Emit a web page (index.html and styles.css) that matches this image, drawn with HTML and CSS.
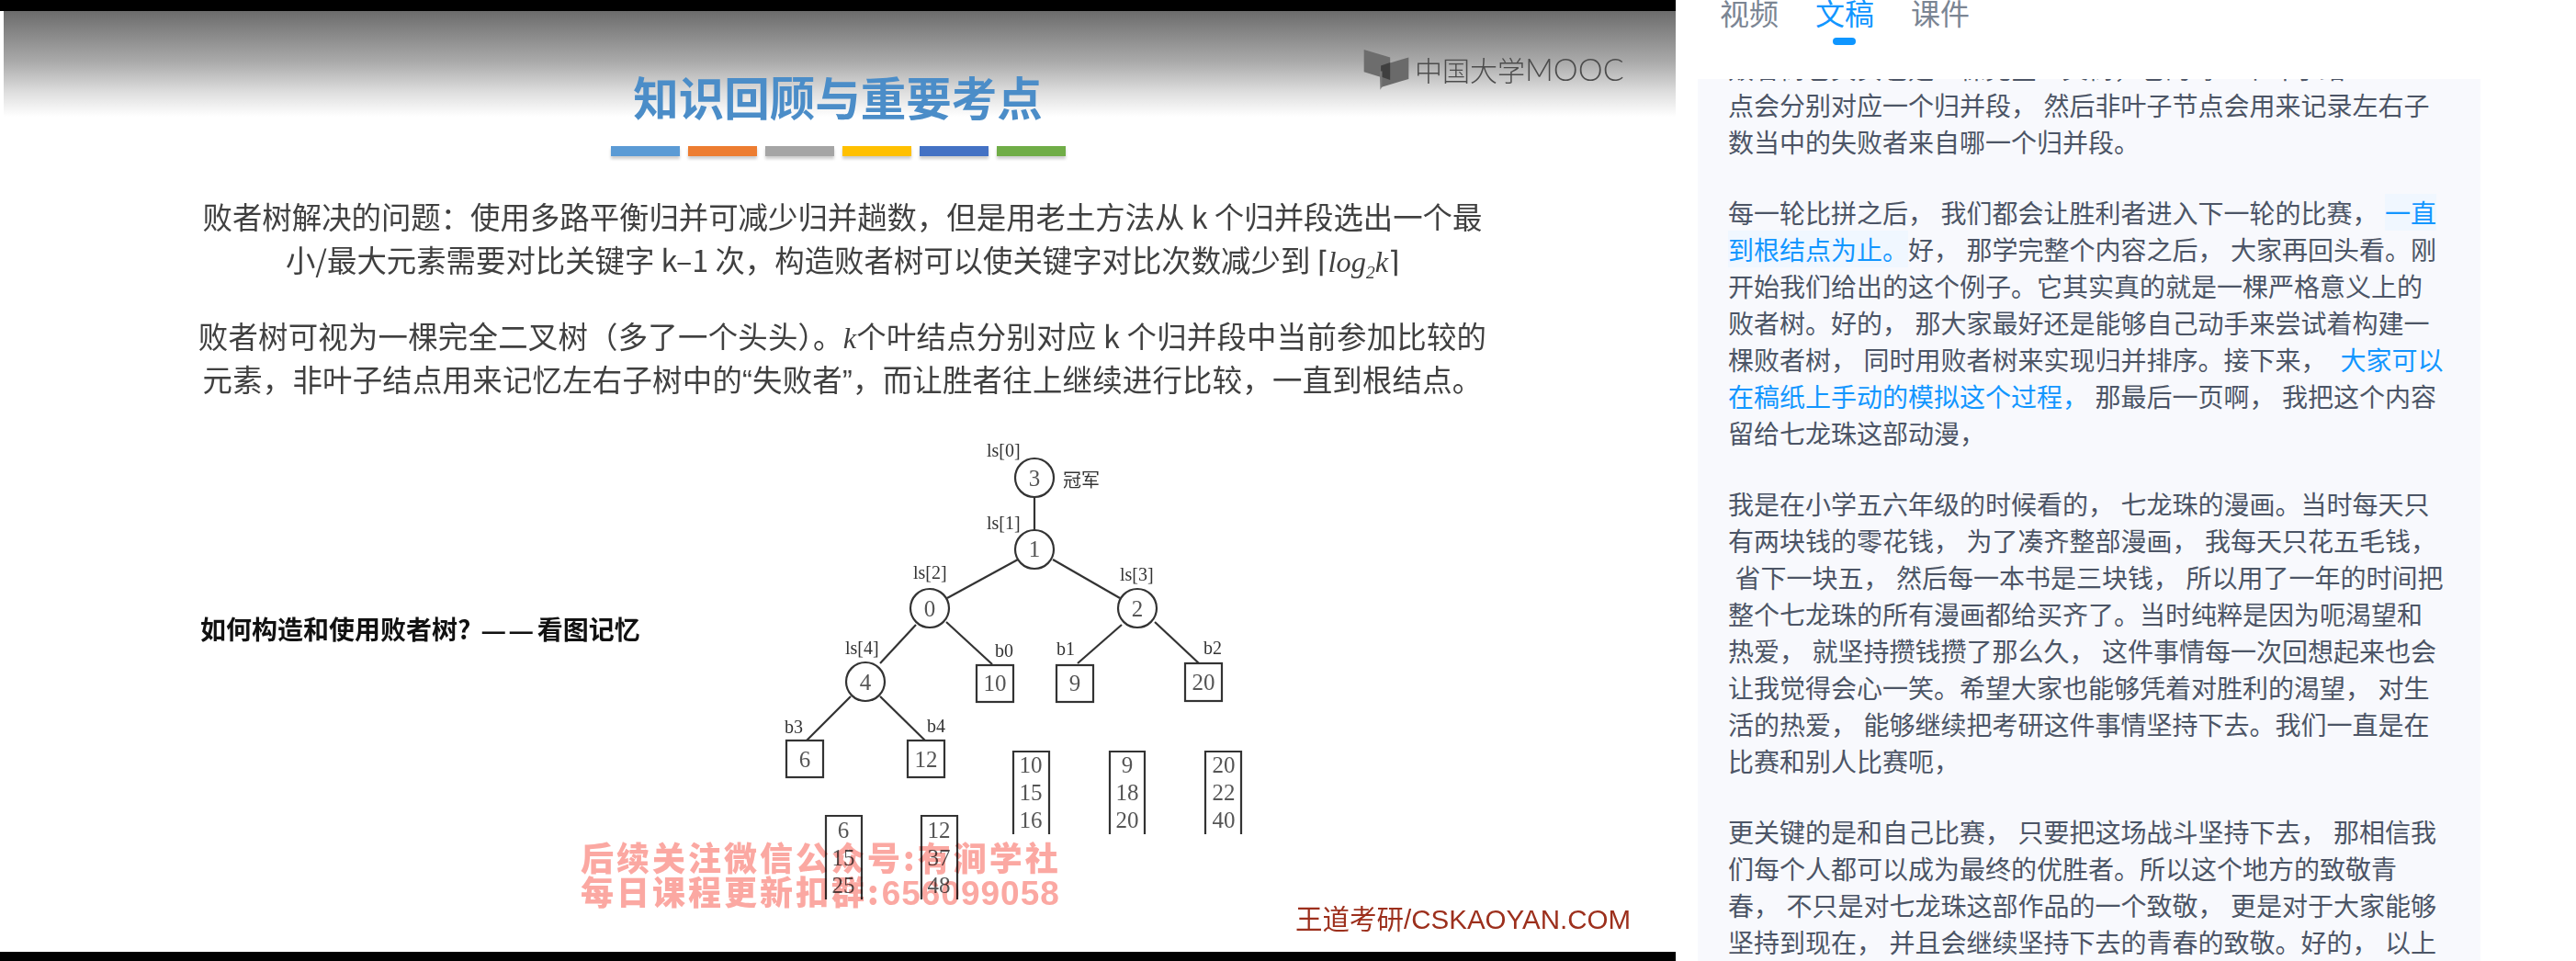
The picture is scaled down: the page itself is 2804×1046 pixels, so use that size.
FILE: index.html
```html
<!DOCTYPE html>
<html lang="zh-CN">
<head>
  <meta charset="UTF-8">
  <title>败者树 - 文稿</title>
  <link rel="stylesheet" href="styles.css">
</head>
<body>
  <div class="video">
    <div class="black-top"></div>
    <div class="slide">
      <div class="logo">
        <svg class="logo-icon" viewBox="40 25 155 135">
          <polygon points="45,30 130,55 130,128 45,102" fill="#6d6d6d"/>
          <polygon points="100,82 190,55 190,125 100,152" fill="#6a6a6a"/>
          <polygon points="100,82 130,72 130,128 100,118" fill="#3f3f3f"/>
          <polygon points="96,100 104,100 104,150 98,160" fill="#777"/>
        </svg>
        <span class="logo-cn">中国大学</span><span class="logo-en">MOOC</span>
      </div>

      <h1 class="title">知识回顾与重要考点</h1>
      <div class="bars">
        <span class="bar c1"></span>
        <span class="bar c2"></span>
        <span class="bar c3"></span>
        <span class="bar c4"></span>
        <span class="bar c5"></span>
        <span class="bar c6"></span>
      </div>

      <p class="para first">败者树解决的问题：使用多路平衡归并可减少归并趟数，但是用老土方法从 k 个归并段选出一个最<br>小/最大元素需要对比关键字 k–1 次，构造败者树可以使关键字对比次数减少到 <span class="bracket">⌈</span><span class="math">log<sub>2</sub>k</span><span class="bracket">⌉</span></p>
      <p class="para second">败者树可视为一棵完全二叉树（多了一个头头）。<span class="math">k</span>个叶结点分别对应 k 个归并段中当前参加比较的<br>元素，非叶子结点用来记忆左右子树中的<span class="quote">“</span>失败者<span class="quote">”</span>，而让胜者往上继续进行比较，一直到根结点。</p>

      <div class="lower">
        <div class="how">如何构造和使用败者树? <span class="dash">——</span>看图记忆</div>
        <svg class="tree" viewBox="840 480 520 510">
          <g class="edges">
            <line x1="1126" y1="541" x2="1126" y2="577"/>
            <line x1="1108" y1="609" x2="1031" y2="651"/>
            <line x1="1146" y1="609" x2="1219" y2="651"/>
            <line x1="997" y1="680" x2="958" y2="722"/>
            <line x1="1030" y1="677" x2="1080" y2="723"/>
            <line x1="1221" y1="680" x2="1173" y2="722"/>
            <line x1="1257" y1="677" x2="1305" y2="722"/>
            <line x1="926" y1="758" x2="878" y2="806"/>
            <line x1="958" y1="758" x2="1007" y2="806"/>
          </g>
          <g class="nodes">
            <circle cx="1126" cy="520" r="21"/>
            <circle cx="1126" cy="598" r="21"/>
            <circle cx="1012" cy="662" r="21"/>
            <circle cx="1238" cy="662" r="21"/>
            <circle cx="942" cy="742" r="21"/>
            <rect x="1063" y="724" width="40" height="40"/>
            <rect x="1150" y="724" width="40" height="40"/>
            <rect x="1290" y="722" width="40" height="41"/>
            <rect x="856" y="806" width="40" height="40"/>
            <rect x="988" y="806" width="40" height="40"/>
          </g>
          <g class="runs">
            <polyline points="1103,908 1103,818 1142,818 1142,908"/>
            <polyline points="1208,908 1208,818 1246,818 1246,908"/>
            <polyline points="1312,908 1312,818 1351,818 1351,908"/>
            <polyline points="899,979 899,888 938,888 938,979"/>
            <polyline points="1003,979 1003,888 1042,888 1042,979"/>
          </g>
          <g class="labels">
            <text x="1074" y="497">ls[0]</text>
            <text x="1074" y="576">ls[1]</text>
            <text x="994" y="630">ls[2]</text>
            <text x="1219" y="632">ls[3]</text>
            <text x="920" y="712">ls[4]</text>
            <text x="1083" y="715">b0</text>
            <text x="1150" y="713">b1</text>
            <text x="1310" y="712">b2</text>
            <text x="854" y="798">b3</text>
            <text x="1009" y="797">b4</text>
            <text class="champion" x="1157" y="530">冠军</text>
          </g>
          <g class="values">
            <text x="1126" y="529">3</text>
            <text x="1126" y="606">1</text>
            <text x="1012" y="671">0</text>
            <text x="1238" y="671">2</text>
            <text x="942" y="751">4</text>
            <text x="1083" y="752">10</text>
            <text x="1170" y="752">9</text>
            <text x="1310" y="751">20</text>
            <text x="876" y="835">6</text>
            <text x="1008" y="835">12</text>
            <text x="1122" y="841">10</text>
            <text x="1122" y="871">15</text>
            <text x="1122" y="901">16</text>
            <text x="1227" y="841">9</text>
            <text x="1227" y="871">18</text>
            <text x="1227" y="901">20</text>
            <text x="1332" y="841">20</text>
            <text x="1332" y="871">22</text>
            <text x="1332" y="901">40</text>
            <text x="918" y="912">6</text>
            <text x="918" y="942">15</text>
            <text x="918" y="972">25</text>
            <text x="1022" y="912">12</text>
            <text x="1022" y="942">37</text>
            <text x="1022" y="972">48</text>
          </g>
        </svg>
      </div>

      <div class="site">王道考研/CSKAOYAN.COM</div>

      <div class="mark">后续关注微信公众号:有涧学社<br>每日课程更新扣群:<span class="mark-num">656099058</span></div>
    </div>
    <div class="black-bottom"></div>
  </div>

  <div class="side">
    <div class="tabs">
      <div class="tab">视频</div>
      <div class="tab active">文稿</div>
      <div class="tab">课件</div>
    </div>
    <div class="panel">
      <div class="transcript">
        <p>败者树它其实也是一棵完全二叉树，它的每一个叶子结<br>点会分别对应一个归并段， 然后非叶子节点会用来记录左右子<br>数当中的失败者来自哪一个归并段。</p>
        <p>每一轮比拼之后， 我们都会让胜利者进入下一轮的比赛， <span class="hl-bg"> 一直<br>到根结点为止。</span>好， 那学完整个内容之后， 大家再回头看。刚<br>开始我们给出的这个例子。它其实真的就是一棵严格意义上的<br>败者树。好的， 那大家最好还是能够自己动手来尝试着构建一<br>棵败者树， 同时用败者树来实现归并排序。接下来， <span class="hl">&nbsp;大家可以<br>在稿纸上手动的模拟这个过程，</span> 那最后一页啊， 我把这个内容<br>留给七龙珠这部动漫，</p>
        <p>我是在小学五六年级的时候看的， 七龙珠的漫画。当时每天只<br>有两块钱的零花钱， 为了凑齐整部漫画， 我每天只花五毛钱，<br>&nbsp;省下一块五， 然后每一本书是三块钱， 所以用了一年的时间把<br>整个七龙珠的所有漫画都给买齐了。当时纯粹是因为呃渴望和<br>热爱， 就坚持攒钱攒了那么久， 这件事情每一次回想起来也会<br>让我觉得会心一笑。希望大家也能够凭着对胜利的渴望， 对生<br>活的热爱， 能够继续把考研这件事情坚持下去。我们一直是在<br>比赛和别人比赛呃，</p>
        <p>更关键的是和自己比赛， 只要把这场战斗坚持下去， 那相信我<br>们每个人都可以成为最终的优胜者。所以这个地方的致敬青<br>春， 不只是对七龙珠这部作品的一个致敬， 更是对于大家能够<br>坚持到现在， 并且会继续坚持下去的青春的致敬。好的， 以上</p>
      </div>
    </div>
  </div>
</body>
</html>
```

FILE: styles.css
```css
* {
  box-sizing: border-box;
}
html, body {
  height: 100%;
}
body {
  margin: 0;
  display: flex;
  overflow: hidden;
  background: #fff;
  font-family: "Noto Sans CJK SC", "Liberation Sans", sans-serif;
}

/* video */
.video {
  width: 1824px;
  height: 1046px;
  display: flex;
  flex-direction: column;
}
.black-top {
  height: 12px;
  background: #000;
}
.black-bottom {
  height: 10px;
  background: #000;
}
.slide {
  flex: 1;
  position: relative;
  padding-top: 63px;
  background: #fff linear-gradient(#6c6c6c, #aaa 48%, #dedede 77%, #fff) 4px 0 / 100% 115px no-repeat;
  overflow: hidden;
  filter: blur(0.6px);
}
.logo {
  position: absolute;
  left: 1483px;
  top: 40px;
  display: flex;
  align-items: center;
  color: #4c4c4c;
}
.logo-icon {
  width: 52px;
  height: 46px;
  margin-right: 5px;
}
.logo-cn {
  font-size: 30px;
  font-weight: 300;
  line-height: 46px;
}
.logo-en {
  font-family: "Lato", "Liberation Sans", sans-serif;
  font-size: 34px;
  font-weight: 300;
  line-height: 46px;
}
.title {
  margin: 0;
  font-size: 49.5px;
  line-height: 60px;
  font-weight: 700;
  text-align: center;
  color: #4b8dc8;
}
.bars {
  display: flex;
  justify-content: center;
  gap: 9px;
  margin-top: 24px;
}
.bar {
  width: 75px;
  height: 11px;
  box-shadow: 0 3px 3px rgba(0,0,0,0.2);
}
.c1 { background: #5b9bd5; }
.c2 { background: #ed7d31; }
.c3 { background: #a5a5a5; }
.c4 { background: #ffc000; }
.c5 { background: #4472c4; }
.c6 { background: #70ad47; }

.para {
  margin: 0;
  padding-left: 10px;
  text-align: center;
  font-size: 32.4px;
  line-height: 47px;
  color: #404040;
}
.first {
  margin-top: 41px;
}
.second {
  margin-top: 36px;
  letter-spacing: 0.25px;
}
/* line-height 0 so the other fonts don't stretch the line */
.math {
  font-family: "Liberation Serif", serif;
  font-style: italic;
  line-height: 0;
}
.math sub {
  font-size: 60%;
  line-height: 0;
}
.bracket {
  font-family: "DejaVu Sans", serif;
  font-weight: 300;
  line-height: 0;
}
.quote {
  font-family: "Liberation Sans", sans-serif;
  line-height: 0;
}
.lower {
  display: flex;
  margin-top: 45px;
  padding-left: 218px;
}
.how {
  width: 622px;
  margin-top: 184px;
  font-size: 28px;
  line-height: 40px;
  font-weight: 700;
  color: #111;
  white-space: nowrap;
}
.dash {
  font-family: "Liberation Sans", sans-serif;
  font-size: 25px;
  line-height: 0;
  letter-spacing: 5px;
  margin-left: 6px;
}
.tree {
  width: 520px;
  height: 510px;
}
.edges line, .nodes circle, .nodes rect, .runs polyline {
  stroke: #333;
  stroke-width: 2.2;
  fill: none;
}
.labels text {
  font-family: "Liberation Serif", serif;
  font-size: 20px;
  fill: #333;
}
.labels .champion {
  font-family: "Noto Sans CJK SC", serif;
  font-size: 20px;
}
.values text {
  font-family: "Liberation Serif", serif;
  font-size: 25px;
  fill: #555;
  text-anchor: middle;
}
.site {
  padding-right: 49px;
  text-align: right;
  font-family: "Liberation Sans", "Noto Sans CJK SC", sans-serif;
  font-size: 29.5px;
  line-height: 22px;
  color: #9c2f1c;
}
.mark {
  position: absolute;
  left: 632px;
  top: 902px;
  font-size: 36px;
  line-height: 37px;
  font-weight: 900;
  letter-spacing: 3px;
  color: #fba8a2;
  mix-blend-mode: multiply;
  white-space: nowrap;
}
.mark-num {
  font-family: "Liberation Sans", sans-serif;
  font-size: 37px;
  line-height: 0;
  letter-spacing: 1px;
}

/* right column */
.side {
  flex: 1;
}
.tabs {
  display: flex;
  gap: 40px;
  height: 86px;
  padding-left: 48px;
}
.tab {
  position: relative;
  height: 29px;
  font-size: 32px;
  line-height: 27px;
  color: #7b8593;
}
.tab.active {
  color: #1296ff;
}
.tab.active::after {
  content: "";
  position: absolute;
  left: 19px;
  top: 41px;
  width: 25px;
  height: 8px;
  border-radius: 4px;
  background: #0f96ff;
}
.panel {
  width: 852px;
  height: 960px;
  margin-left: 24px;
  padding-left: 33px;
  background: #f8f9fd;
  overflow: hidden;
}
.transcript {
  margin-top: -32px;
  font-size: 28px;
  line-height: 40px;
  word-spacing: 1.2px;
  color: #4c5566;
  white-space: nowrap;
}
.transcript p {
  margin: 0 0 37px;
}
.hl {
  color: #1296ff;
}
.hl-bg {
  color: #1296ff;
  background: #f0f7ff;
}
```
